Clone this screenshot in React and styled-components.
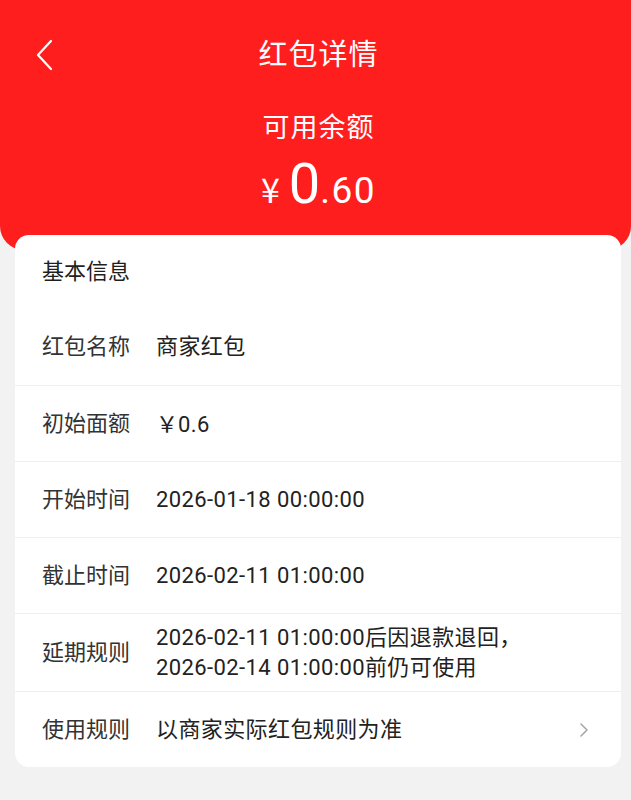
import React from 'react';
import styled, { createGlobalStyle } from 'styled-components';

const red = '#ff1e1e';
const fontStack = 'Roboto, "Noto Sans CJK SC", sans-serif';

const GlobalStyle = createGlobalStyle`
  html, body {
    margin: 0;
    padding: 0;
    background: #f2f2f2;
    font-family: ${fontStack};
    -webkit-font-smoothing: antialiased;
  }
`;

const Page = styled.div`
  min-height: 800px;
  background: #f2f2f2;
`;

const Header = styled.header`
  display: flex;
  flex-direction: column;
  align-items: center;
  height: 250px;
  padding-left: 6px;
  background: ${red};
  color: #fff;
  border-radius: 0 0 24px 24px;
  box-sizing: border-box;
`;

const NavBar = styled.div`
  position: relative;
  display: flex;
  align-items: center;
  justify-content: center;
  align-self: stretch;
  height: 60px;
  margin-top: 25px;
`;

const BackButton = styled.button`
  position: absolute;
  left: 25px;
  top: 13px;
  display: flex;
  padding: 0;
  border: 0;
  background: none;
  cursor: pointer;
`;

const Title = styled.h1`
  margin: 0;
  font-size: 29px;
  font-weight: 400;
  line-height: 36px;
  letter-spacing: 1px;
`;

const BalanceLabel = styled.div`
  margin-top: 25px;
  font-size: 27px;
  line-height: 36px;
  letter-spacing: 1px;
`;

const Amount = styled.div`
  display: flex;
  align-items: baseline;
  margin-top: 8px;
  line-height: 60px;
`;

const Currency = styled.span`
  margin-right: 9px;
  font-family: "Noto Sans CJK SC", sans-serif;
  font-size: 34px;
`;

const Integer = styled.span`
  font-size: 56px;
`;

const Fraction = styled.span`
  font-size: 37px;
  letter-spacing: 1.5px;
`;

const Card = styled.section`
  margin: -15px 10px 0 15px;
  background: #fff;
  border-radius: 14px;
  overflow: hidden;
`;

const CardTitle = styled.div`
  display: flex;
  align-items: center;
  height: 74px;
  padding: 0 27px;
  font-size: 22px;
  line-height: 30px;
  color: #1f1f1f;
`;

const Row = styled.div`
  display: flex;
  align-items: center;
  min-height: ${({ $tall }) => ($tall ? '78px' : '76px')};
  padding: 0 32px 0 27px;
  font-size: 22px;
  line-height: 30px;
  color: #222;
  box-sizing: border-box;
  & + & {
    border-top: 1px solid #eeeeee;
  }
`;

const Label = styled.span`
  flex: 0 0 114px;
  color: #333;
`;

const Value = styled.span`
  flex: 1;
  letter-spacing: 0.4px;
`;

const Yen = styled.span`
  font-family: "Noto Sans CJK SC", sans-serif;
  letter-spacing: 0;
`;

const Chevron = () => (
  <svg width="10" height="16" viewBox="0 0 10 16">
    <path d="M2 2l6 6-6 6" fill="none" stroke="#a8a8a8" strokeWidth="1.6" strokeLinecap="round" strokeLinejoin="round" />
  </svg>
);

const BackIcon = () => (
  <svg width="24" height="34" viewBox="0 0 24 34">
    <path d="M20 3L7 17l13 14" fill="none" stroke="#fff" strokeWidth="2.2" strokeLinecap="round" strokeLinejoin="round" />
  </svg>
);

const rows = [
  { label: '红包名称', value: '商家红包' },
  { label: '初始面额', value: <><Yen>￥</Yen>0.6</> },
  { label: '开始时间', value: '2026-01-18 00:00:00' },
  { label: '截止时间', value: '2026-02-11 01:00:00' },
  {
    label: '延期规则',
    value: ['2026-02-11 01:00:00后因退款退回，', '2026-02-14 01:00:00前仍可使用'],
    tall: true,
  },
  { label: '使用规则', value: '以商家实际红包规则为准', link: true },
];

const App = () => (
  <Page>
    <GlobalStyle />
    <Header>
      <NavBar>
        <BackButton aria-label="返回"><BackIcon /></BackButton>
        <Title>红包详情</Title>
      </NavBar>
      <BalanceLabel>可用余额</BalanceLabel>
      <Amount>
        <Currency>¥</Currency>
        <Integer>0</Integer>
        <Fraction>.60</Fraction>
      </Amount>
    </Header>
    <Card>
      <CardTitle>基本信息</CardTitle>
      {rows.map((row) => (
        <Row key={row.label} $tall={row.tall}>
          <Label>{row.label}</Label>
          <Value>
            {Array.isArray(row.value)
              ? row.value.map((line) => <div key={line}>{line}</div>)
              : row.value}
          </Value>
          {row.link && <Chevron />}
        </Row>
      ))}
    </Card>
  </Page>
);

export default App;
